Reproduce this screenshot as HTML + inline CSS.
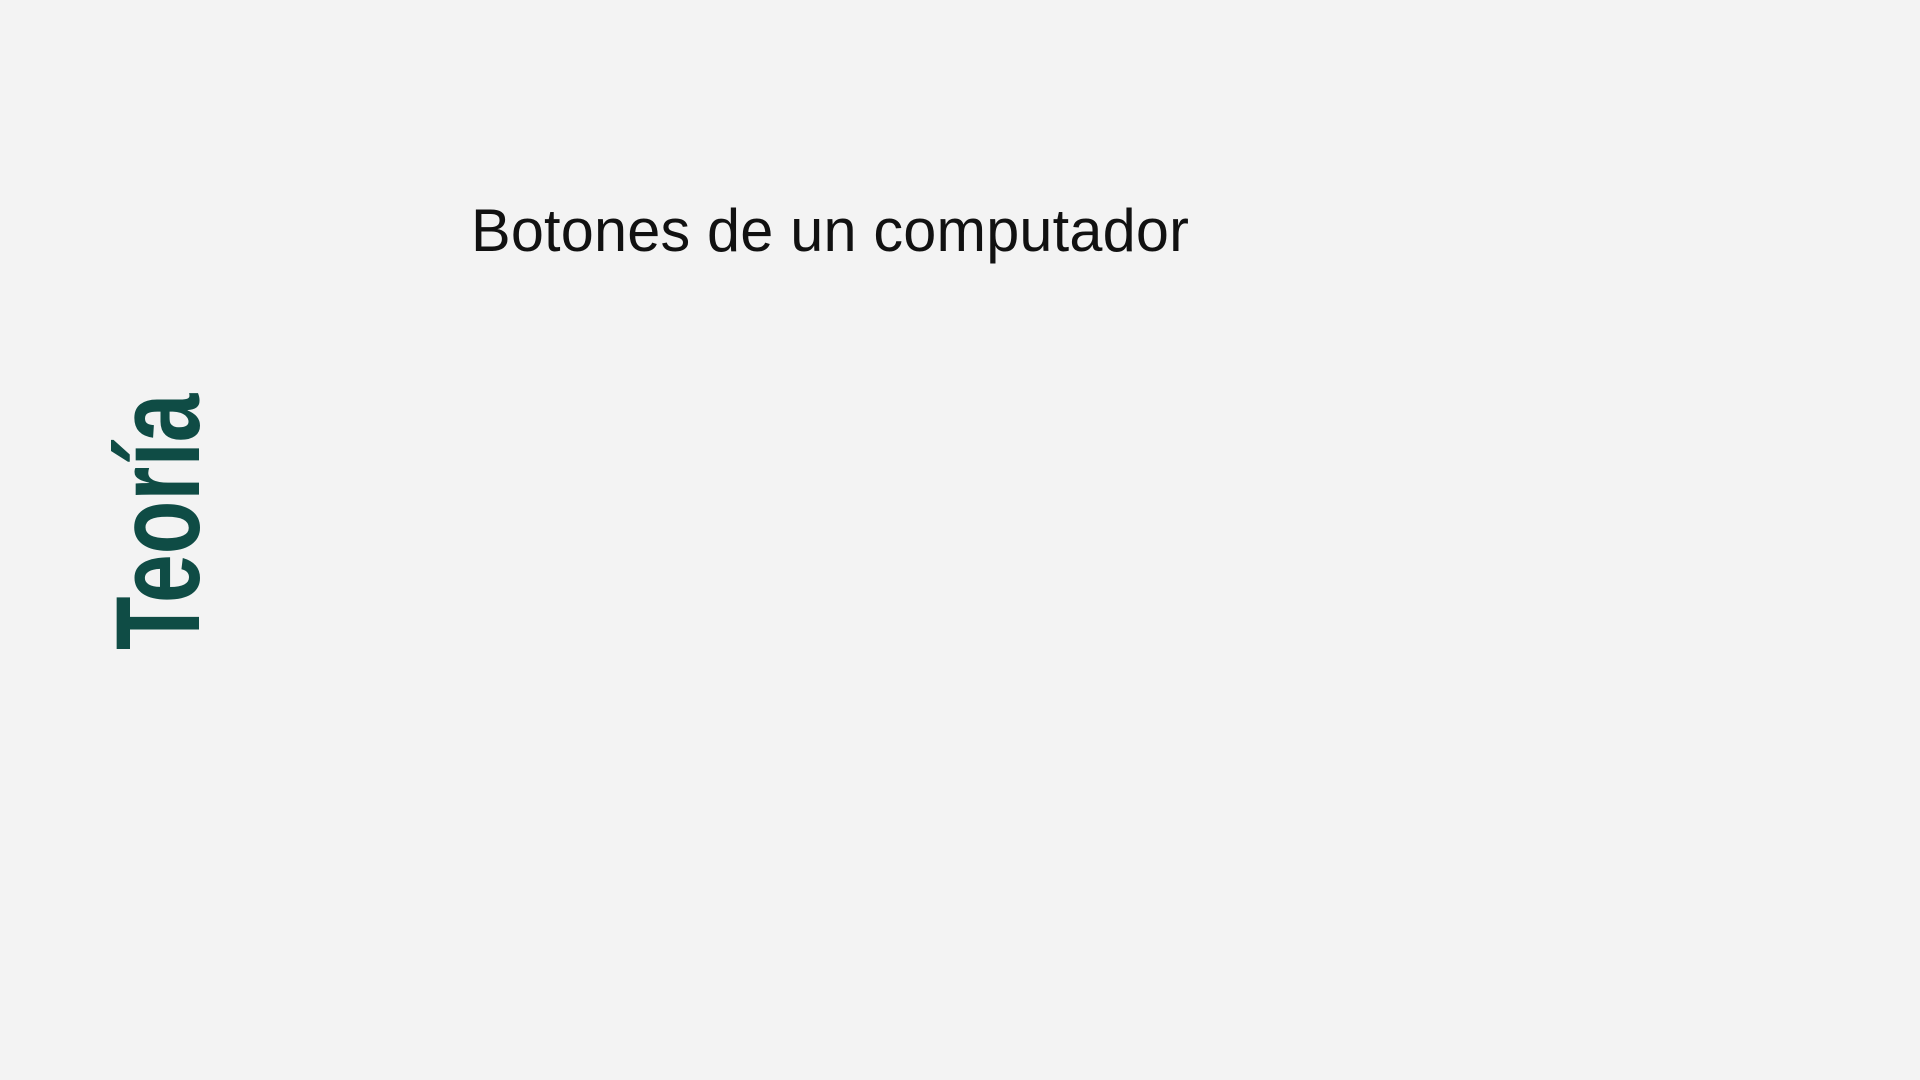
<!DOCTYPE html>
<html><head><meta charset="utf-8"><style>
html,body{margin:0;padding:0;width:1920px;height:1080px;background:#f3f3f3;overflow:hidden;}
.t{position:absolute;left:471px;top:196px;font-family:"Liberation Sans",sans-serif;font-size:60px;color:#111;white-space:nowrap;letter-spacing:0.2px;transform-origin:0 0;transform:scaleX(0.99);}
.v{position:absolute;left:120px;top:650px;font-family:"Liberation Sans",sans-serif;font-weight:bold;font-size:120px;line-height:1;color:#0f4c45;white-space:nowrap;transform-origin:0 0;transform:rotate(-90deg) scaleX(0.73);height:88px;}
</style></head><body>
<div class="t">Botones de un computador</div>
<div class="v"><span style="position:relative;top:-22px">Teoría</span></div>
</body></html>
